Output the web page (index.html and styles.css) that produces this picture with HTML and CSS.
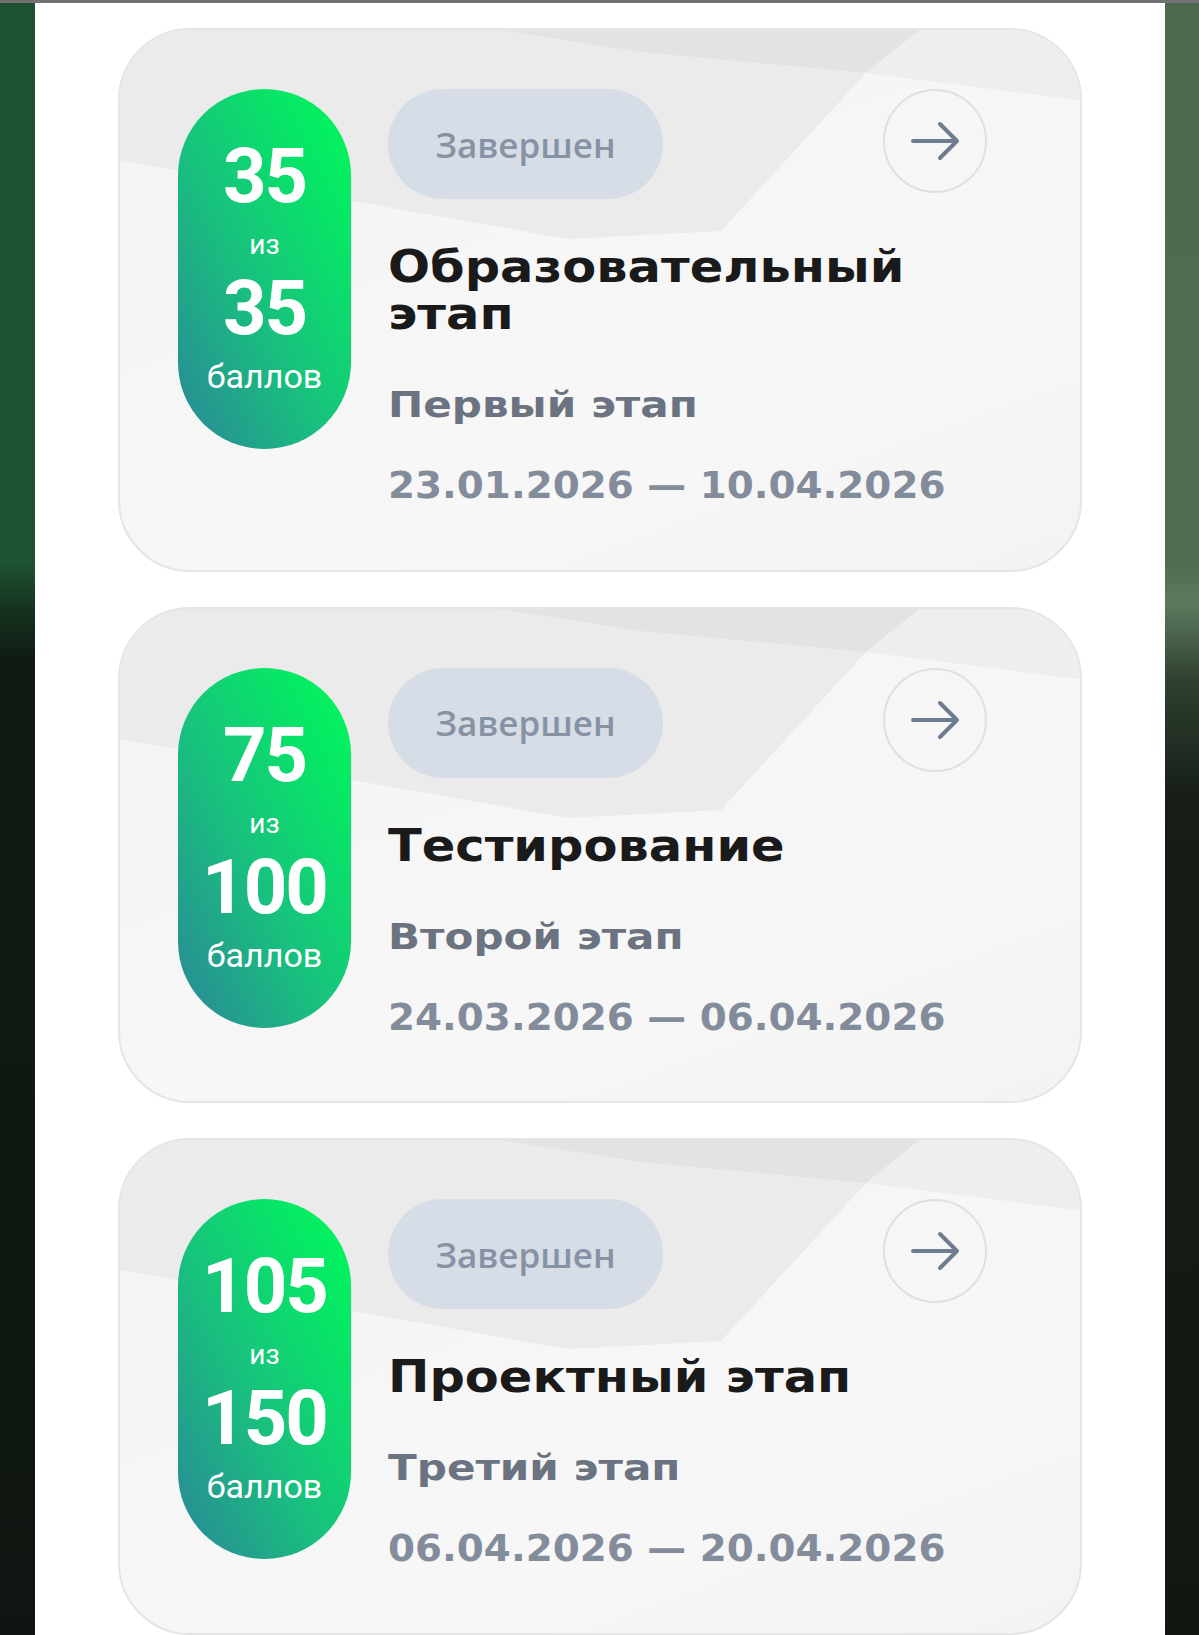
FILE: index.html
```html
<!DOCTYPE html>
<html lang="ru">
<head>
    <meta charset="UTF-8">
    <meta name="viewport" content="width=device-width, initial-scale=1.0">
    <title>Этапы</title>
    <link rel="stylesheet" href="styles.css">
</head>
<body>
    <div class="frame">
        <div class="edge edge-left"></div>

        <main class="panel">
            <!-- Stage 1 -->
            <section class="stage-card">
                <svg class="card-bg" width="964" height="260" viewBox="0 0 964 260" aria-hidden="true">
                    <polygon points="0,0 800,0 746,43 601,201 448,209 0,130" fill="#ebebeb"/>
                    <polygon points="380,0 800,0 746,43 520,22" fill="#000" fill-opacity="0.03"/>
                    <polygon points="800,0 964,0 964,71 746,43" fill="#eeeeee"/>
                </svg>
                <div class="score-pill">
                    <span class="score-num">35</span>
                    <span class="score-of">из</span>
                    <span class="score-num score-num-2">35</span>
                    <span class="score-label">баллов</span>
                </div>
                <div class="stage-body">
                    <div class="stage-head">
                        <span class="status">Завершен</span>
                        <a class="go-btn" href="#">
                            <svg width="104" height="104" viewBox="0 0 104 104"><path d="M30 52 H74 M57 35 L74 52 L57 69"/></svg>
                        </a>
                    </div>
                    <h2 class="stage-title"><span>Образовательный этап</span></h2>
                    <div class="stage-sub"><span>Первый этап</span></div>
                    <div class="stage-dates"><span>23.01.2026 — 10.04.2026</span></div>
                </div>
            </section>

            <!-- Stage 2 -->
            <section class="stage-card">
                <svg class="card-bg" width="964" height="260" viewBox="0 0 964 260" aria-hidden="true">
                    <polygon points="0,0 800,0 746,43 601,201 448,209 0,130" fill="#ebebeb"/>
                    <polygon points="380,0 800,0 746,43 520,22" fill="#000" fill-opacity="0.03"/>
                    <polygon points="800,0 964,0 964,71 746,43" fill="#eeeeee"/>
                </svg>
                <div class="score-pill">
                    <span class="score-num">75</span>
                    <span class="score-of">из</span>
                    <span class="score-num score-num-2">100</span>
                    <span class="score-label">баллов</span>
                </div>
                <div class="stage-body">
                    <div class="stage-head">
                        <span class="status">Завершен</span>
                        <a class="go-btn" href="#">
                            <svg width="104" height="104" viewBox="0 0 104 104"><path d="M30 52 H74 M57 35 L74 52 L57 69"/></svg>
                        </a>
                    </div>
                    <h2 class="stage-title"><span>Тестирование</span></h2>
                    <div class="stage-sub"><span>Второй этап</span></div>
                    <div class="stage-dates"><span>24.03.2026 — 06.04.2026</span></div>
                </div>
            </section>

            <!-- Stage 3 -->
            <section class="stage-card">
                <svg class="card-bg" width="964" height="260" viewBox="0 0 964 260" aria-hidden="true">
                    <polygon points="0,0 800,0 746,43 601,201 448,209 0,130" fill="#ebebeb"/>
                    <polygon points="380,0 800,0 746,43 520,22" fill="#000" fill-opacity="0.03"/>
                    <polygon points="800,0 964,0 964,71 746,43" fill="#eeeeee"/>
                </svg>
                <div class="score-pill">
                    <span class="score-num">105</span>
                    <span class="score-of">из</span>
                    <span class="score-num score-num-2">150</span>
                    <span class="score-label">баллов</span>
                </div>
                <div class="stage-body">
                    <div class="stage-head">
                        <span class="status">Завершен</span>
                        <a class="go-btn" href="#">
                            <svg width="104" height="104" viewBox="0 0 104 104"><path d="M30 52 H74 M57 35 L74 52 L57 69"/></svg>
                        </a>
                    </div>
                    <h2 class="stage-title"><span>Проектный этап</span></h2>
                    <div class="stage-sub"><span>Третий этап</span></div>
                    <div class="stage-dates"><span>06.04.2026 — 20.04.2026</span></div>
                </div>
            </section>
        </main>

        <div class="edge edge-right"></div>
    </div>
</body>
</html>
```

FILE: styles.css
```css
* {
    box-sizing: border-box;
}

body {
    margin: 0;
    padding: 0;
    font-family: "Open Sans", "DejaVu Sans", sans-serif;
    background-color: #fff;
    overflow: hidden;
}

.frame {
    display: flex;
    border-top: 3px solid #727272;
    height: 1635px;
}

.edge {
    width: 35px;
    flex-shrink: 0;
}

.edge-left {
    background: linear-gradient(to bottom, #1c5131 0, #1d5232 560px, #15301d 610px, #101a13 660px, #0f1611 100%);
}

.edge-right {
    width: 34px;
    background: linear-gradient(to bottom, #4d6b4e 0, #4e6c4f 560px, #5d7a5e 600px, #2e3f2f 680px, #161d17 800px, #121712 100%);
}

.panel {
    width: 1130px;
    flex-shrink: 0;
    background-color: #fff;
    padding: 25px 83px 0 83px;
    display: flex;
    flex-direction: column;
    gap: 35px;
}

/* Stage card */

.stage-card {
    position: relative;
    display: flex;
    align-items: flex-start;
    gap: 37px;
    padding: 59px 93px 66px 58px;
    border: 2px solid #e5e5e5;
    border-radius: 72px;
    background: linear-gradient(160deg, #f3f3f3 0%, #f6f6f6 40%, #f7f7f7 70%, #f3f3f3 100%);
    overflow: hidden;
}

.card-bg {
    position: absolute;
    top: 0;
    left: 0;
}

.score-pill {
    position: relative;
    flex-shrink: 0;
    width: 173px;
    height: 360px;
    padding-top: 49px;
    border-radius: 87px;
    background: linear-gradient(to top right, #2b8698 0%, #18c27d 45%, #06e865 80%, #00f95a 100%);
    color: #fff;
    font-family: Roboto, "Open Sans", sans-serif;
    display: flex;
    flex-direction: column;
    align-items: center;
}

.score-num {
    font-size: 76px;
    font-weight: 700;
    line-height: 76px;
    letter-spacing: -2px;
}

.score-of {
    margin-top: 17px;
    font-size: 28px;
    line-height: 28px;
}

.score-num-2 {
    margin-top: 11px;
}

.score-label {
    margin-top: 13px;
    font-size: 34px;
    line-height: 34px;
}

.stage-body {
    position: relative;
    flex: 1;
    min-width: 0;
}

.stage-head {
    display: flex;
    justify-content: space-between;
    align-items: flex-start;
}

.status {
    width: 275px;
    height: 110px;
    border-radius: 55px;
    background-color: #d6dde6;
    color: #8792a5;
    font-size: 35px;
    font-weight: 600;
    display: flex;
    align-items: center;
    justify-content: center;
}

.go-btn {
    width: 104px;
    height: 104px;
    border-radius: 50%;
    border: 2px solid #e0e0e0;
    display: flex;
    align-items: center;
    justify-content: center;
}

.go-btn svg {
    flex-shrink: 0;
    margin: -2px;
}

.go-btn path {
    fill: none;
    stroke: #6f7c90;
    stroke-width: 4;
    stroke-linecap: round;
    stroke-linejoin: round;
}

/* Texts in a wide display face */

.stage-title,
.stage-sub,
.stage-dates {
    font-family: "DejaVu Sans", sans-serif;
    font-weight: 700;
    margin: 0;
}

.stage-title span,
.stage-sub span,
.stage-dates span {
    display: inline-block;
    transform-origin: left center;
}

.stage-title {
    margin-top: 44px;
    max-width: 520px;
    font-size: 45px;
    line-height: 47px;
    color: #1a1a1a;
}

.stage-title span {
    transform: scaleX(1.1);
}

.stage-sub {
    margin-top: 50px;
    font-size: 36px;
    line-height: 36px;
    color: #6b7380;
}

.stage-sub span {
    transform: scaleX(1.17);
}

.stage-dates {
    margin-top: 45px;
    font-size: 37px;
    line-height: 36px;
    color: #838c9a;
    white-space: nowrap;
}

.stage-dates span {
    transform: scaleX(1.05);
}
```
